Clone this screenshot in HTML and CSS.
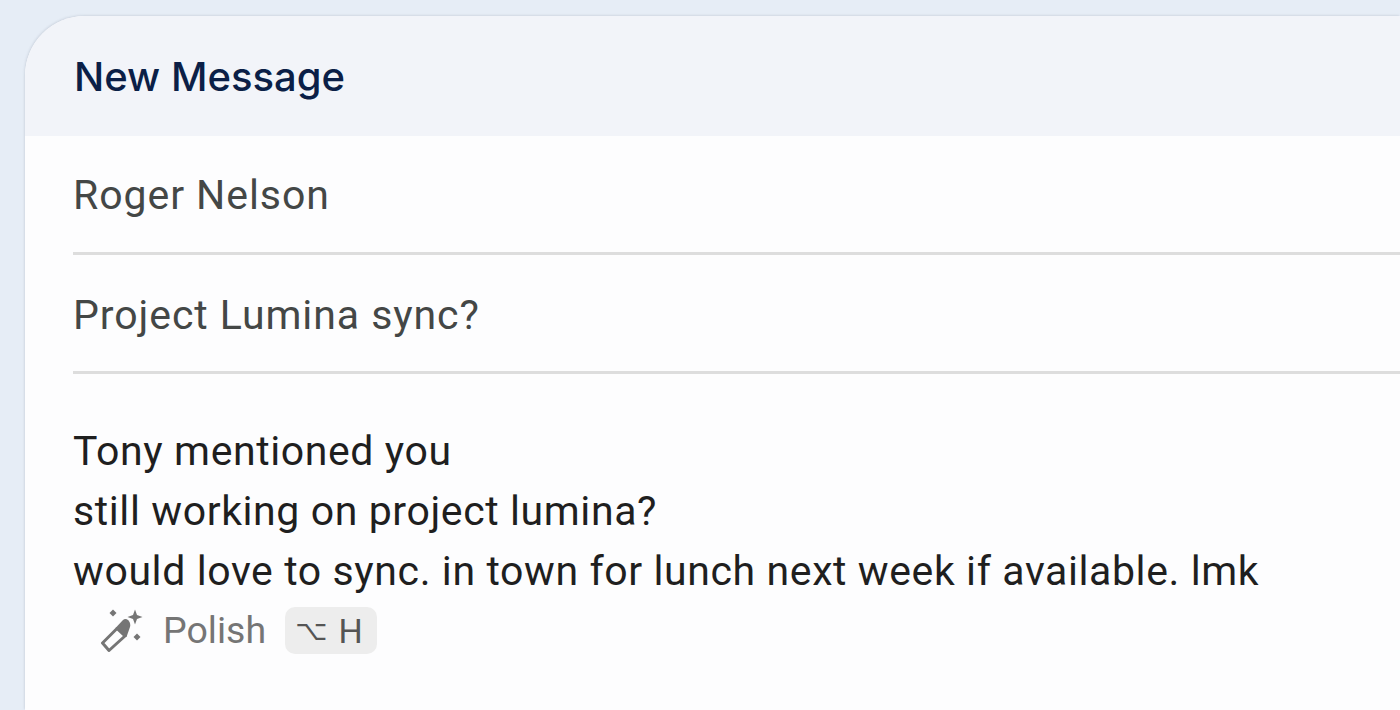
FILE: index.html
```html
<!DOCTYPE html>
<html lang="en">
<head>
<meta charset="utf-8">
<title>New Message</title>
<link rel="stylesheet" href="styles.css">
</head>
<body>
<main class="compose">
  <header class="compose-head">New Message</header>
  <div class="field"><span class="field-text">Roger Nelson</span></div>
  <div class="field"><span class="field-text">Project Lumina sync?</span></div>
  <div class="body-text">
    <p>Tony mentioned you</p>
    <p>still working on project lumina?</p>
    <p>would love to sync. in town for lunch next week if available. lmk</p>
  </div>
  <div class="polish">
    <svg class="wand" viewBox="0 0 44 44" width="44" height="44" aria-hidden="true">
      <path class="wand-outline" d="M2.5 35 L17 20.5 L25 28 L9 42.5 Z"/>
      <path class="wand-fill" d="M15.5 20 L23 12 Q25.5 10 28.5 12.5 Q31 15.5 30 19 L26.5 29 Z"/>
      <path class="wand-fill" d="M35 1.5 L37 7 L42.5 9 L37 11 L35 16.5 L33 11 L27.5 9 L33 7 Z"/>
      <path class="wand-fill" d="M13 1.5 L16.5 5 L13 8.5 L9.5 5 Z"/>
      <path class="wand-fill" d="M37 25.5 L40.5 29 L37 32.5 L33.5 29 Z"/>
    </svg>
    <span class="polish-label">Polish</span>
    <span class="kbd"><span class="kbd-opt">⌥</span><span class="kbd-key">H</span></span>
  </div>
</main>
</body>
</html>
```

FILE: styles.css
```css
* { box-sizing: border-box; }
html, body { margin: 0; height: 100%; overflow: hidden; }
body {
  background: #e6edf6;
  padding: 16px 0 0 25px;
  font-family: Roboto, "Liberation Sans", sans-serif;
}
.compose {
  height: 694px;
  width: 1375px;
  background: #fdfdfe;
  border-top-left-radius: 60px;
  box-shadow: -1px -1px 2px rgba(150, 160, 175, .25);
  overflow: hidden;
}
.compose-head {
  height: 120px;
  background: #f2f4f9;
  padding: 0 0 0 49px;
  display: flex;
  align-items: center;
  font-family: Inter, "Liberation Sans", sans-serif;
  font-size: 40px;
  font-weight: 500;
  color: #0b1f47;
}
.field {
  height: 119px;
  margin-left: 48px;
  border-bottom: 3px solid #dddddd;
  display: flex;
  align-items: center;
  padding-top: 4px;
  font-size: 41px;
  letter-spacing: 0.93px;
  color: #444746;
}
.field:first-of-type { padding-top: 2px; }
.body-text {
  margin: 47px 0 0 48px;
  font-size: 41px;
  letter-spacing: 0.6px;
  line-height: 60px;
  color: #1f1f1f;
}
.body-text p { margin: 0; }
.polish {
  display: flex;
  align-items: center;
  margin: 4px 0 0 75px;
  height: 50px;
}
.wand { flex: none; }
.wand-outline { fill: none; stroke: #757575; stroke-width: 3; stroke-linejoin: round; }
.wand-fill { fill: #757575; }
.polish-label {
  margin-left: 19px;
  font-size: 37.5px;
  color: #757575;
}
.kbd {
  margin: 1px 0 0 19px;
  width: 92px;
  height: 47px;
  padding-right: 4px;
  border-radius: 10px;
  background: #ededed;
  color: #555;
  display: flex;
  align-items: center;
  justify-content: center;
  gap: 11px;
}
.kbd-opt { font-family: "DejaVu Sans", sans-serif; font-size: 28px; font-weight: 400; }
.kbd-key { font-size: 34px; }
```
